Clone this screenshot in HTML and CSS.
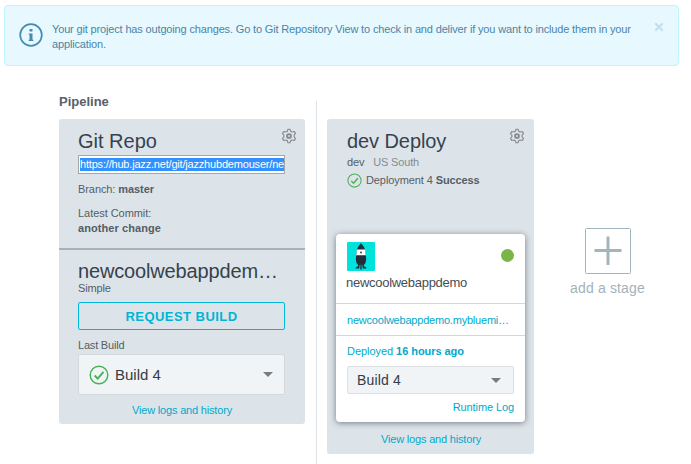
FILE: index.html
```html
<!DOCTYPE html>
<html lang="en">
<head>
<meta charset="utf-8">
<title>Pipeline</title>
<link rel="stylesheet" href="styles.css">
</head>
<body>
<svg class="defs" width="0" height="0">
  <symbol id="gear" viewBox="0 0 16 16"><path d="M6.300 3.200L7 1.200h2l.7 2 1.300.8 2.300-.5 1.200 1.900-1.400 1.700v1.800l1.400 1.700-1.200 1.900-2.300-.5-1.300.8-.7 2H7l-.7-2-1.300-.8-2.300.5-1.200-1.900 1.400-1.700V7.100L1.500 5.400l1.200-1.900 2.300.5z" fill="none" stroke="currentColor" stroke-width="1.100" stroke-linejoin="round"/><circle cx="8" cy="8" r="1.900" fill="none" stroke="currentColor" stroke-width="1.900"/></symbol>
  <symbol id="check" viewBox="0 0 20 20"><circle cx="10" cy="10" r="8.800" fill="none" stroke="currentColor" stroke-width="1.400"/><path d="M5.700 10.500l3 3.100 5.800-6.700" fill="none" stroke="currentColor" stroke-width="1.900"/></symbol>
</svg>
<div class="alert">
  <svg class="info" viewBox="0 0 24 24"><circle cx="12" cy="12" r="10.800" fill="none" stroke="currentColor" stroke-width="1.700"/><path d="M10.500 6h3v2.500h-3zM9.700 10.500h3.800v6.200h.8V18H9.700v-1.300h.8v-4.900h-.8z" fill="currentColor"/></svg>
  <p class="message">Your git project has outgoing changes. Go to Git Repository View to check in and deliver if you want to include them in your<br>application.</p>
  <svg class="close" viewBox="0 0 10 10"><path d="M1.200 1.200l7.600 7.600M8.800 1.200L1.200 8.800" stroke="currentColor" stroke-width="2.300"/></svg>
</div>
<main class="pipeline">
  <section class="column">
    <h1 class="heading">Pipeline</h1>
    <div class="card source">
      <div class="top">
        <div class="title-row"><h2>Git Repo</h2><svg class="gear"><use href="#gear"/></svg></div>
        <div class="repo-url"><span>https://hub.jazz.net/git/jazzhubdemouser/ne</span></div>
        <p class="branch">Branch: <b>master</b></p>
        <p class="commit">Latest Commit:<br><b>another change</b></p>
      </div>
      <div class="bottom">
        <h2 class="project">newcoolwebappdem…</h2>
        <p class="kind">Simple</p>
        <div class="request">REQUEST BUILD</div>
        <p class="last">Last Build</p>
        <div class="select large"><svg class="check"><use href="#check"/></svg><span>Build 4</span><i class="arrow"></i></div>
        <a class="history">View logs and history</a>
      </div>
    </div>
  </section>
  <section class="column deploy-column">
    <div class="card deploy">
      <div class="title-row"><h2>dev Deploy</h2><svg class="gear"><use href="#gear"/></svg></div>
      <p class="region">dev <span>US South</span></p>
      <p class="status"><svg class="check"><use href="#check"/></svg><span>Deployment 4 <b>Success</b></span></p>
      <div class="app">
        <div class="app-head">
          <div class="app-icons">
            <svg class="rocket" viewBox="0 0 28 29"><rect width="28" height="29" rx="1" fill="#00e3dc"/><path d="M14 1l1 1.500c2 2 3 4.200 3.300 6.500l.4 6H9.300l.4-6c.3-2.300 1.300-4.500 3.300-6.500z" fill="#222e3a"/><path d="M9.800 7.500h8.400l.5 6h-9.400z" fill="#fff"/><circle cx="14" cy="10.500" r=".9" fill="#222e3a"/><path d="M9.300 13.500h9.400l.5 3.500-.7 4-1.700 2 .4 1.500 2 .8v1.200h-3.400l-.5-3.500-.6-.5v5h-1.400v-5l-.6.5-.5 3.500H8.800v-1.200l2-.8.4-1.500-1.700-2-.7-4z" fill="#222e3a"/></svg>
            <span class="dot"></span>
          </div>
          <p class="app-name">newcoolwebappdemo</p>
        </div>
        <a class="app-url">newcoolwebappdemo.mybluemi…</a>
        <div class="app-foot">
          <p class="deployed">Deployed <b>16 hours ago</b></p>
          <div class="select"><span>Build 4</span><i class="arrow"></i></div>
          <a class="runtime">Runtime Log</a>
        </div>
      </div>
      <a class="history">View logs and history</a>
    </div>
  </section>
  <section class="add">
    <svg class="plus" viewBox="0 0 46 46"><rect x=".5" y=".5" width="45" height="45" rx="1" fill="none" stroke="#a0b4bb"/><path d="M9.500 21h27v3h-27zM21.500 8.500h3v28.500h-3z" fill="#a3b4ba"/></svg>
    <span>add a stage</span>
  </section>
</main>
</body>
</html>
```
FILE: styles.css
```css
* { box-sizing: border-box; }
body {
  margin: 0;
  width: 691px;
  height: 464px;
  overflow: hidden;
  background: #fff;
  font: 11px/15px "Liberation Sans", Arial, sans-serif;
  color: #555d66;
}
p, h1, h2 { margin: 0; }
.defs { display: none; }
.alert {
  display: flex;
  margin: 5px 0 0 4px;
  width: 675px;
  height: 61px;
  border: 1px solid #bdf4fe;
  border-radius: 4px;
  background: #e8f8ff;
  color: #4b84a5;
}
.info { width: 24px; height: 24px; margin: 17px 0 0 14px; color: #468bb1; }
.message { margin: 16px 0 0 9px; width: 590px; white-space: nowrap; letter-spacing: -.155px; }
.close { width: 10px; height: 10px; margin: 16px 0 0 12px; color: #c5dfeb; }
.pipeline { display: flex; height: 398px; }
.column { margin: 28px 0 0 59px; width: 246px; }
.heading { font-size: 13px; line-height: 15px; height: 25px; color: #58606a; }
.card { border-radius: 3px; background: #dde4e9; }
.source { height: 305px; }
.top { height: 131px; padding: 9px 20px 0 19px; border-bottom: 2px solid #a5b4bb; }
.title-row { display: flex; justify-content: space-between; }
h2 { font-weight: 400; font-size: 20px; line-height: 26px; color: #35424f; white-space: nowrap; }
.gear { width: 16px; height: 16px; margin-right: -12px; color: #83898e; }
.repo-url {
  margin-top: 1px;
  height: 19px;
  padding: 2px 0 0 1px;
  border: 1px solid #a6a6a6;
  background: #fff;
  white-space: nowrap;
}
.repo-url span { display: block; height: 13px; line-height: 13px; background: #3390ff; color: #fff; letter-spacing: -.19px; }
.branch { margin-top: 8px; letter-spacing: -.08px; }
.commit { margin-top: 9px; letter-spacing: -.05px; }
.commit b { letter-spacing: .08px; }
.bottom { display: flex; flex-direction: column; padding: 8px 20px 0 19px; }
.project { height: 24px; letter-spacing: -.15px; }
.kind { margin-top: -1px; letter-spacing: -.15px; }
.request {
  margin-top: 6px;
  height: 28px;
  border: 1px solid #00b9da;
  border-radius: 2px;
  color: #00b4d5;
  font-size: 13px;
  font-weight: 700;
  letter-spacing: .45px;
  line-height: 27px;
  text-align: center;
}
.last { margin-top: 8px; letter-spacing: -.2px; }
.select {
  display: flex;
  align-items: center;
  height: 28px;
  border: 1px solid #dde1e4;
  border-radius: 2px;
  padding: 0 12px 0 9px;
  background: #f0f4f7;
  color: #333c45;
  font-size: 14px;
  letter-spacing: .15px;
}
.select.large { height: 41px; margin-top: 1px; padding: 0 11px 0 10px; border-color: #d4d8da; font-size: 15px; letter-spacing: 0; }
.arrow { margin-left: auto; border: 5px solid transparent; border-top-color: #777d7e; border-bottom: 0; }
.check { flex: none; color: #46b153; }
.large .check { width: 20px; height: 20px; margin-right: 6px; }
.history { display: block; text-align: center; margin-top: 8px; padding-left: 1px; color: #00a9cc; letter-spacing: -.18px; }
.deploy-column { margin: 35px 0 0 11px; width: 218px; padding: 18px 0 0 10px; border-left: 1px solid #dfe3e6; }
.deploy { width: 207px; height: 335px; padding: 9px 9px 0; }
.deploy .title-row { padding-left: 11px; }
.deploy .title-row h2 { letter-spacing: -.08px; }
.deploy .gear { margin-right: 0; }
.region { margin: 1px 0 0 11px; letter-spacing: -.15px; }
.region span { margin-left: 6px; color: #858b91; }
.status { display: flex; align-items: center; margin: 3px 0 0 11px; letter-spacing: -.1px; }
.status .check { width: 15px; height: 15px; margin-right: 4px; }
.app { width: 189px; height: 188px; margin-top: 46px; border-radius: 4px; background: #fff; box-shadow: 0 1px 6px rgba(60, 70, 80, .65); }
.app-head { height: 70px; padding: 8px 11px 0; border-bottom: 1px solid #d5d8da; }
.app-icons { display: flex; justify-content: space-between; }
.rocket { width: 28px; height: 29px; }
.dot { width: 13px; height: 13px; margin-top: 7px; border-radius: 50%; background: #7bb546; }
.app-name { margin: 4px 0 0 -1px; font-size: 13px; letter-spacing: -.28px; color: #454d55; }
.app-url { display: block; height: 32px; padding: 9px 0 0 11px; border-bottom: 1px solid #d5d8da; color: #00a9cc; white-space: nowrap; letter-spacing: -.21px; }
.app-foot { padding: 8px 11px 0; color: #00a9cc; }
.deployed { letter-spacing: -.05px; }
.app-foot .select { margin-top: 7px; }
.runtime { display: block; margin-top: 6px; text-align: right; letter-spacing: -.1px; }
.deploy > .history { margin-top: 10px; }
.add { display: flex; flex-direction: column; align-items: center; width: 92px; margin: 162px 0 0 27.5px; color: #a3b3b9; font-size: 14px; letter-spacing: .15px; }
.plus { width: 46px; height: 46px; margin-bottom: 7px; }
```
